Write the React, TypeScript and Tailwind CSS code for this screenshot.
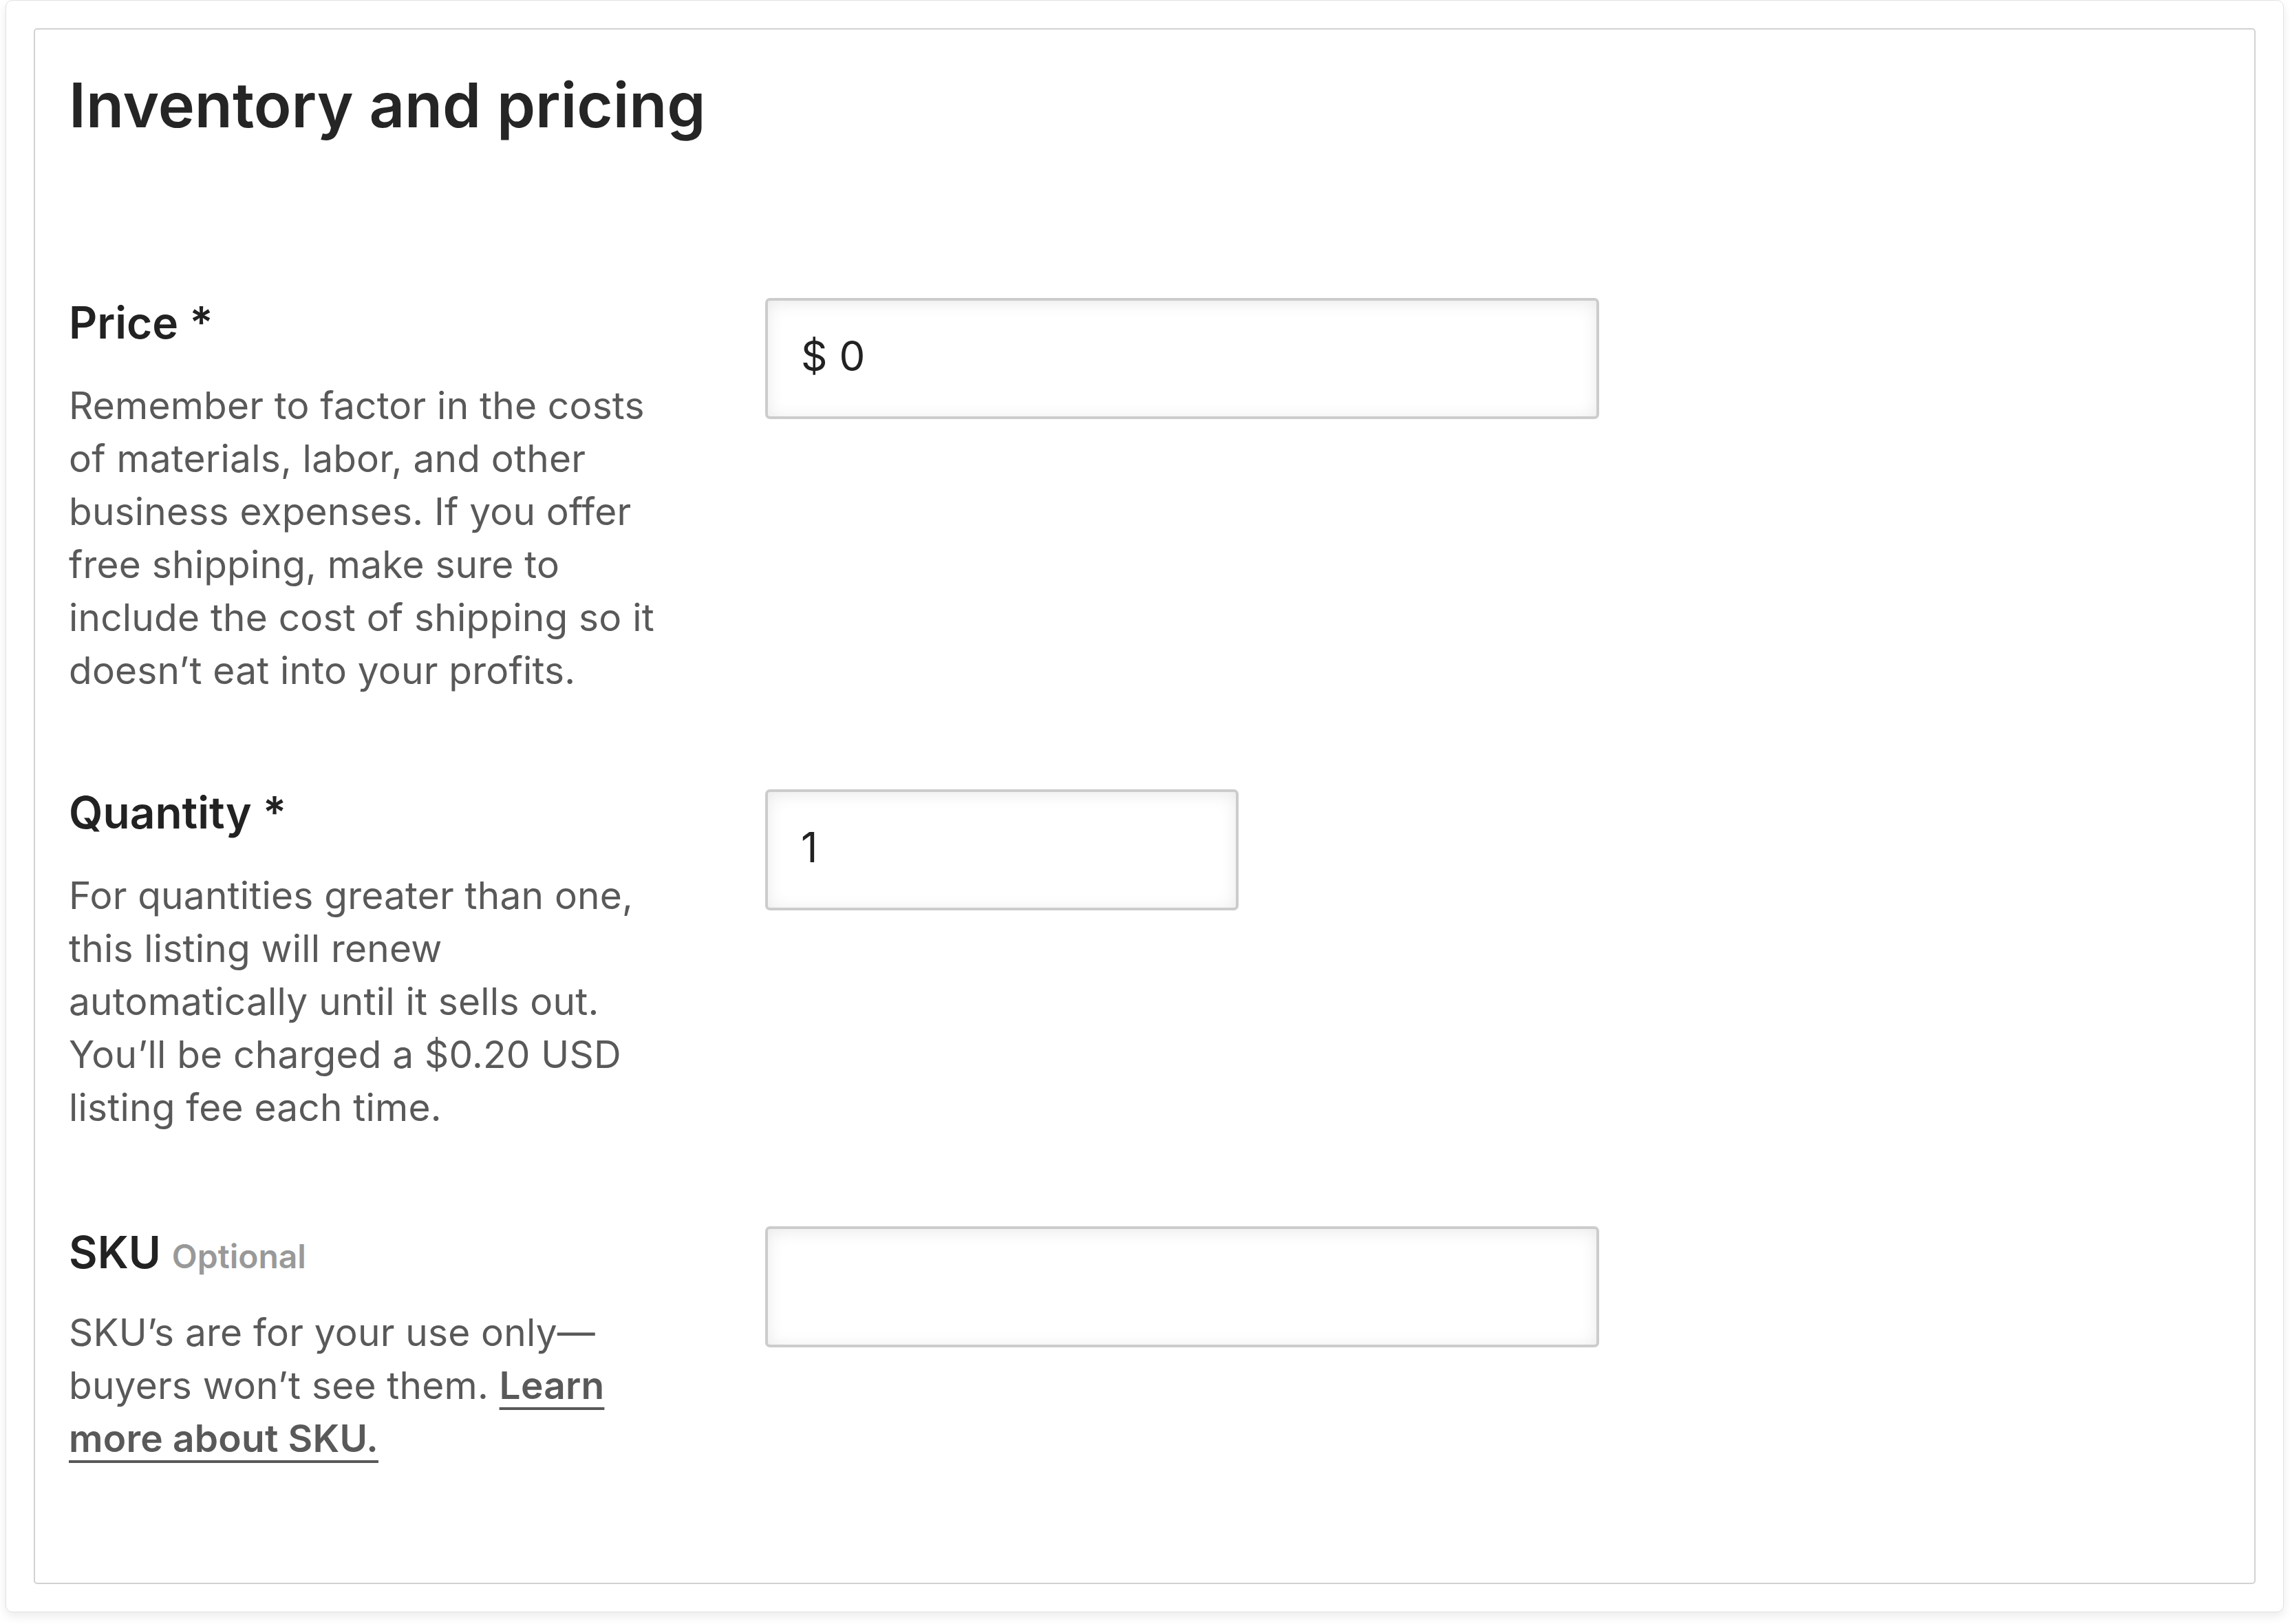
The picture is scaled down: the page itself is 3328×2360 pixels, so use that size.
import React from "react";

const labelCls = "block text-[64px] leading-[80px] font-semibold text-[#222222]";
const helpCls = "text-[55px] leading-[77px] tracking-[0.2px] text-[#595959]";
const fieldCls =
  "flex items-center h-[176px] rounded-[7px] border-[4px] border-[#cccccc] bg-white pl-[48px] pb-[8px] shadow-[inset_0_3px_24px_rgba(0,0,0,0.09)] text-[60px] text-[#222222]";

export default function App() {
  return (
    <div className="min-h-screen bg-white pl-[8px] pr-[9px] font-['Inter','Noto_Sans',sans-serif]">
      <div className="h-[2343px] rounded-[10px] border border-[#e2e2e2] bg-white p-[40px] shadow-[0_6px_14px_rgba(0,0,0,0.08)]">
        <section className="h-full rounded-[5px] border-2 border-[#d2d2d2] pl-[49px] pt-[56px]">
          <h2 className="text-[90px] leading-[1.2] font-semibold text-[#252525]">
            Inventory and pricing
          </h2>

          {/* Price */}
          <div className="mt-[222px] grid grid-cols-[860px_1212px] gap-x-[152px] items-start">
            <div>
              <label className={labelCls}>Price *</label>
              <p className={`mt-[42px] ${helpCls}`}>
                Remember to factor in the costs of materials, labor, and other business
                expenses. If you offer free shipping, make sure to include the cost of
                shipping so it doesn’t eat into your profits.
              </p>
            </div>
            <div className={`mt-[4px] ${fieldCls}`}>
              <span>$</span>
              <input
                readOnly
                defaultValue="0"
                className="ml-[17px] w-full bg-transparent outline-none"
              />
            </div>
          </div>

          {/* Quantity */}
          <div className="mt-[128px] grid grid-cols-[860px_688px] gap-x-[152px] items-start">
            <div>
              <label className={labelCls}>Quantity *</label>
              <p className={`mt-[42px] ${helpCls}`}>
                For quantities greater than one, this listing will renew automatically
                until it sells out. You’ll be charged a $0.20 USD listing fee each time.
              </p>
            </div>
            <div className={`mt-[6px] ${fieldCls}`}>
              <input readOnly defaultValue="1" className="w-full bg-transparent outline-none" />
            </div>
          </div>

          {/* SKU */}
          <div className="mt-[132px] grid grid-cols-[860px_1212px] gap-x-[152px] items-start">
            <div>
              <label className={labelCls}>
                SKU{" "}
                <span className="text-[48px] font-semibold text-[#999999]">Optional</span>
              </label>
              <p className={`mt-[32px] ${helpCls}`}>
                SKU’s are for your use only—buyers won’t see them.{" "}
                <a
                  href="#"
                  className="font-semibold underline decoration-[4px] underline-offset-[12px]"
                >
                  Learn more about SKU.
                </a>
              </p>
            </div>
            <div className={`mt-[2px] ${fieldCls}`}>
              <input readOnly defaultValue="" className="w-full bg-transparent outline-none" />
            </div>
          </div>
        </section>
      </div>
    </div>
  );
}
